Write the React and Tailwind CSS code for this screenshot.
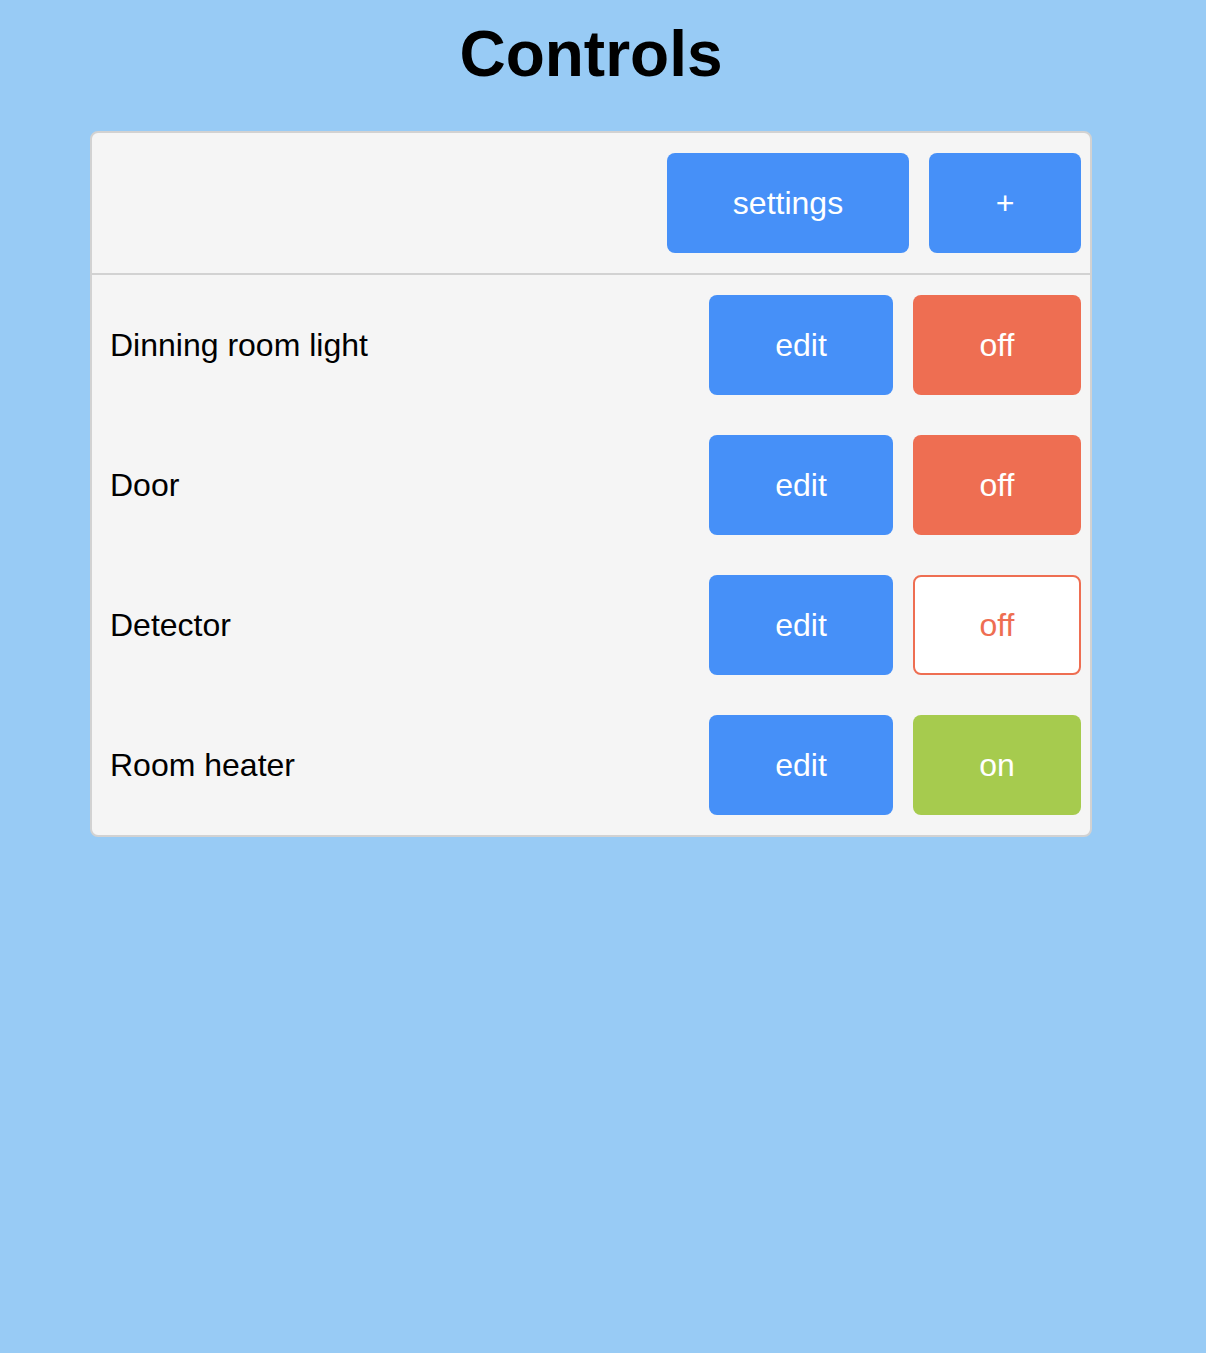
import React from 'react';

const devices = [
  { name: 'Dinning room light', state: 'off', style: 'solid' },
  { name: 'Door', state: 'off', style: 'solid' },
  { name: 'Detector', state: 'off', style: 'outline' },
  { name: 'Room heater', state: 'on', style: 'solid' },
];

const Toggle = ({ state, style }) => {
  if (state === 'on') {
    return (
      <button className="w-[168px] h-[100px] rounded-lg bg-[#a6cb4e] text-white text-[32px]">
        on
      </button>
    );
  }
  if (style === 'outline') {
    return (
      <button className="w-[168px] h-[100px] rounded-lg bg-white border-2 border-[#ee6e52] text-[#ee6e52] text-[32px]">
        off
      </button>
    );
  }
  return (
    <button className="w-[168px] h-[100px] rounded-lg bg-[#ee6e52] text-white text-[32px]">
      off
    </button>
  );
};

const App = () => {
  return (
    <div className="min-h-[1353px] w-full bg-[#98cbf5]" style={{ fontFamily: '"Liberation Sans", Arial, sans-serif' }}>
      <div className="w-[1182px] pt-[22px]">
        <h1 className="text-[64px] leading-none font-bold text-black text-center">Controls</h1>
        <div className="mx-[90px] mt-[45px] bg-[#f5f5f5] border-2 border-[#d2d2d2] rounded-lg">
          <div className="flex justify-end gap-5 pt-5 pb-5 pr-[9px] border-b-2 border-[#d2d2d2]">
            <button className="w-[242px] h-[100px] rounded-lg bg-[#4690f8] text-white text-[32px]">settings</button>
            <button className="w-[152px] h-[100px] rounded-lg bg-[#4690f8] text-white text-[32px]">+</button>
          </div>
          {devices.map((d, index) => (
            <div key={index} className="flex items-center justify-between py-5 pl-[18px] pr-[9px]">
              <span className="text-[32px] text-black">{d.name}</span>
              <div className="flex gap-5">
                <button className="w-[184px] h-[100px] rounded-lg bg-[#4690f8] text-white text-[32px]">edit</button>
                <Toggle state={d.state} style={d.style} />
              </div>
            </div>
          ))}
        </div>
      </div>
    </div>
  );
};

export default App;
